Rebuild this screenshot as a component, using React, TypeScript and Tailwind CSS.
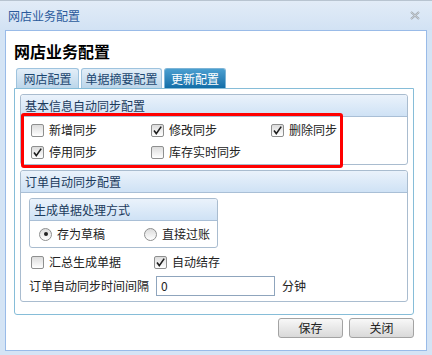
import React from "react";

const font = { fontFamily: '"Noto Sans CJK SC", "Liberation Sans", sans-serif' };

function Check({ checked }: { checked?: boolean }) {
    return (
        <span className="relative w-[13px] h-[13px] shrink-0 rounded-[2px] border border-[#8e8f8f] bg-linear-to-b from-[#dcdcdc] to-white">
            {checked && (
                <svg viewBox="0 0 13 13" className="absolute -left-px -top-px w-[13px] h-[13px]">
                    <path d="M3 6.5 L5.3 9.6 L10.2 2.6" fill="none" stroke="#1e1e1e" strokeWidth="1.6" />
                </svg>
            )}
        </span>
    );
}

function Radio({ checked }: { checked?: boolean }) {
    return (
        <span className="w-[13px] h-[13px] shrink-0 rounded-full border border-[#8e8f8f] bg-linear-to-b from-[#dcdcdc] to-white flex items-center justify-center">
            {checked && <span className="w-[4px] h-[4px] rounded-full bg-[#222]" />}
        </span>
    );
}

function Opt({ label, checked, radio }: { label: string; checked?: boolean; radio?: boolean }) {
    return (
        <label className="flex items-center gap-[5px] text-[12px] leading-[16px] text-[#222]">
            {radio ? <Radio checked={checked} /> : <Check checked={checked} />}
            <span>{label}</span>
        </label>
    );
}

function Legend({ text }: { text: string }) {
    return (
        <div className="h-[22px] flex items-center pl-[4px] bg-linear-to-b from-[#eaf2fb] to-[#cfe2f5] border-b border-[#a9bfd6] text-[12px] text-[#1b3a5c] rounded-t-[3px]">
            {text}
        </div>
    );
}

const tabs = [
    { text: "网店配置", w: "w-[63px]" },
    { text: "单据摘要配置", w: "w-[81px]" },
    { text: "更新配置", w: "w-[62px]", active: true },
];

export default function App() {
    return (
        <div className="w-[432px] h-[355px] bg-[#d4e4f5] flex flex-col border-t border-[#b8c4d0]" style={font}>
            <div className="h-[29px] shrink-0 flex items-center justify-between pl-[8px] pr-[12px] bg-linear-to-b from-[#e2ecf7] to-[#d2e2f4]">
                <span className="text-[12px] text-[#2a5a9c]">网店业务配置</span>
                <svg viewBox="0 0 10 9" className="w-[10px] h-[9px]">
                    <path d="M1 1 L9 8 M9 1 L1 8" stroke="#9aa3ab" strokeWidth="2" />
                    <path d="M1 1 L9 8 M9 1 L1 8" stroke="#eef2f5" strokeWidth="0.6" />
                </svg>
            </div>

            <div className="mx-[5px] mb-[4px] h-[321px] shrink-0 bg-white border border-[#99bbe8] flex flex-col pl-[8px] pr-[14px]">
                <h1 className="mt-[10px] text-[16px] leading-[20px] font-bold text-black">网店业务配置</h1>

                <div className="mt-[7px] flex items-end gap-[1px] pl-[2px]">
                    {tabs.map((t) => (
                        <div
                            key={t.text}
                            className={
                                t.w +
                                " h-[20px] flex items-center justify-center text-[12px] rounded-t-[3px] border border-b-0 " +
                                (t.active
                                    ? "bg-linear-to-b from-[#4a9fd0] to-[#106ea8] border-[#7db4d6] text-white"
                                    : "bg-linear-to-b from-[#e3eef8] to-[#bcd6ea] border-[#9ec3de] text-[#1c4770] mr-[1px]")
                            }
                        >
                            {t.text}
                        </div>
                    ))}
                </div>

                <div className="w-[400px] border border-[#86bdd8] rounded-b-[3px] flex flex-col gap-[5px] pt-[5px] pb-[12px] px-[5px]">
                    <div className="relative border border-[#a9bccf] rounded-[3px]">
                        <Legend text="基本信息自动同步配置" />
                        <div className="grid grid-cols-[120px_120px_auto] gap-y-[6px] pl-[10px] pt-[5px] pb-[4px]">
                            <Opt label="新增同步" />
                            <Opt label="修改同步" checked />
                            <Opt label="删除同步" checked />
                            <Opt label="停用同步" checked />
                            <Opt label="库存实时同步" />
                        </div>
                        <div className="absolute left-0 top-[18px] w-[322px] h-[55px] border-[3px] border-[#ff0000] rounded-[3px]" />
                    </div>

                    <div className="border border-[#a9bccf] rounded-[3px] pb-[5px]">
                        <Legend text="订单自动同步配置" />
                        <div className="ml-[8px] mt-[5px] w-[189px] border border-[#a9bccf] rounded-[3px]">
                            <Legend text="生成单据处理方式" />
                            <div className="flex items-center h-[26px] pl-[9px]">
                                <div className="w-[105px]">
                                    <Opt label="存为草稿" radio checked />
                                </div>
                                <Opt label="直接过账" radio />
                            </div>
                        </div>
                        <div className="flex items-center mt-[6px] pl-[10px]">
                            <div className="w-[123px]">
                                <Opt label="汇总生成单据" />
                            </div>
                            <Opt label="自动结存" checked />
                        </div>
                        <div className="flex items-center mt-[6px] pl-[8px] text-[12px] text-[#222]">
                            <span className="w-[127px]">订单自动同步时间间隔</span>
                            <div className="w-[119px] h-[20px] border border-[#8fa5bd] flex items-center pl-[4px] text-[12px]">0</div>
                            <span className="ml-[7px]">分钟</span>
                        </div>
                    </div>
                </div>

                <div className="mt-[3px] flex justify-end gap-[6px] w-[400px]">
                    {["保存", "关闭"].map((b) => (
                        <button
                            key={b}
                            className="w-[65px] h-[20px] rounded-[3px] border border-[#a3a3a3] bg-linear-to-b from-[#f8f8f8] to-[#d9d9d9] text-[12px] text-[#222] flex items-center justify-center"
                        >
                            {b}
                        </button>
                    ))}
                </div>
            </div>
        </div>
    );
}
